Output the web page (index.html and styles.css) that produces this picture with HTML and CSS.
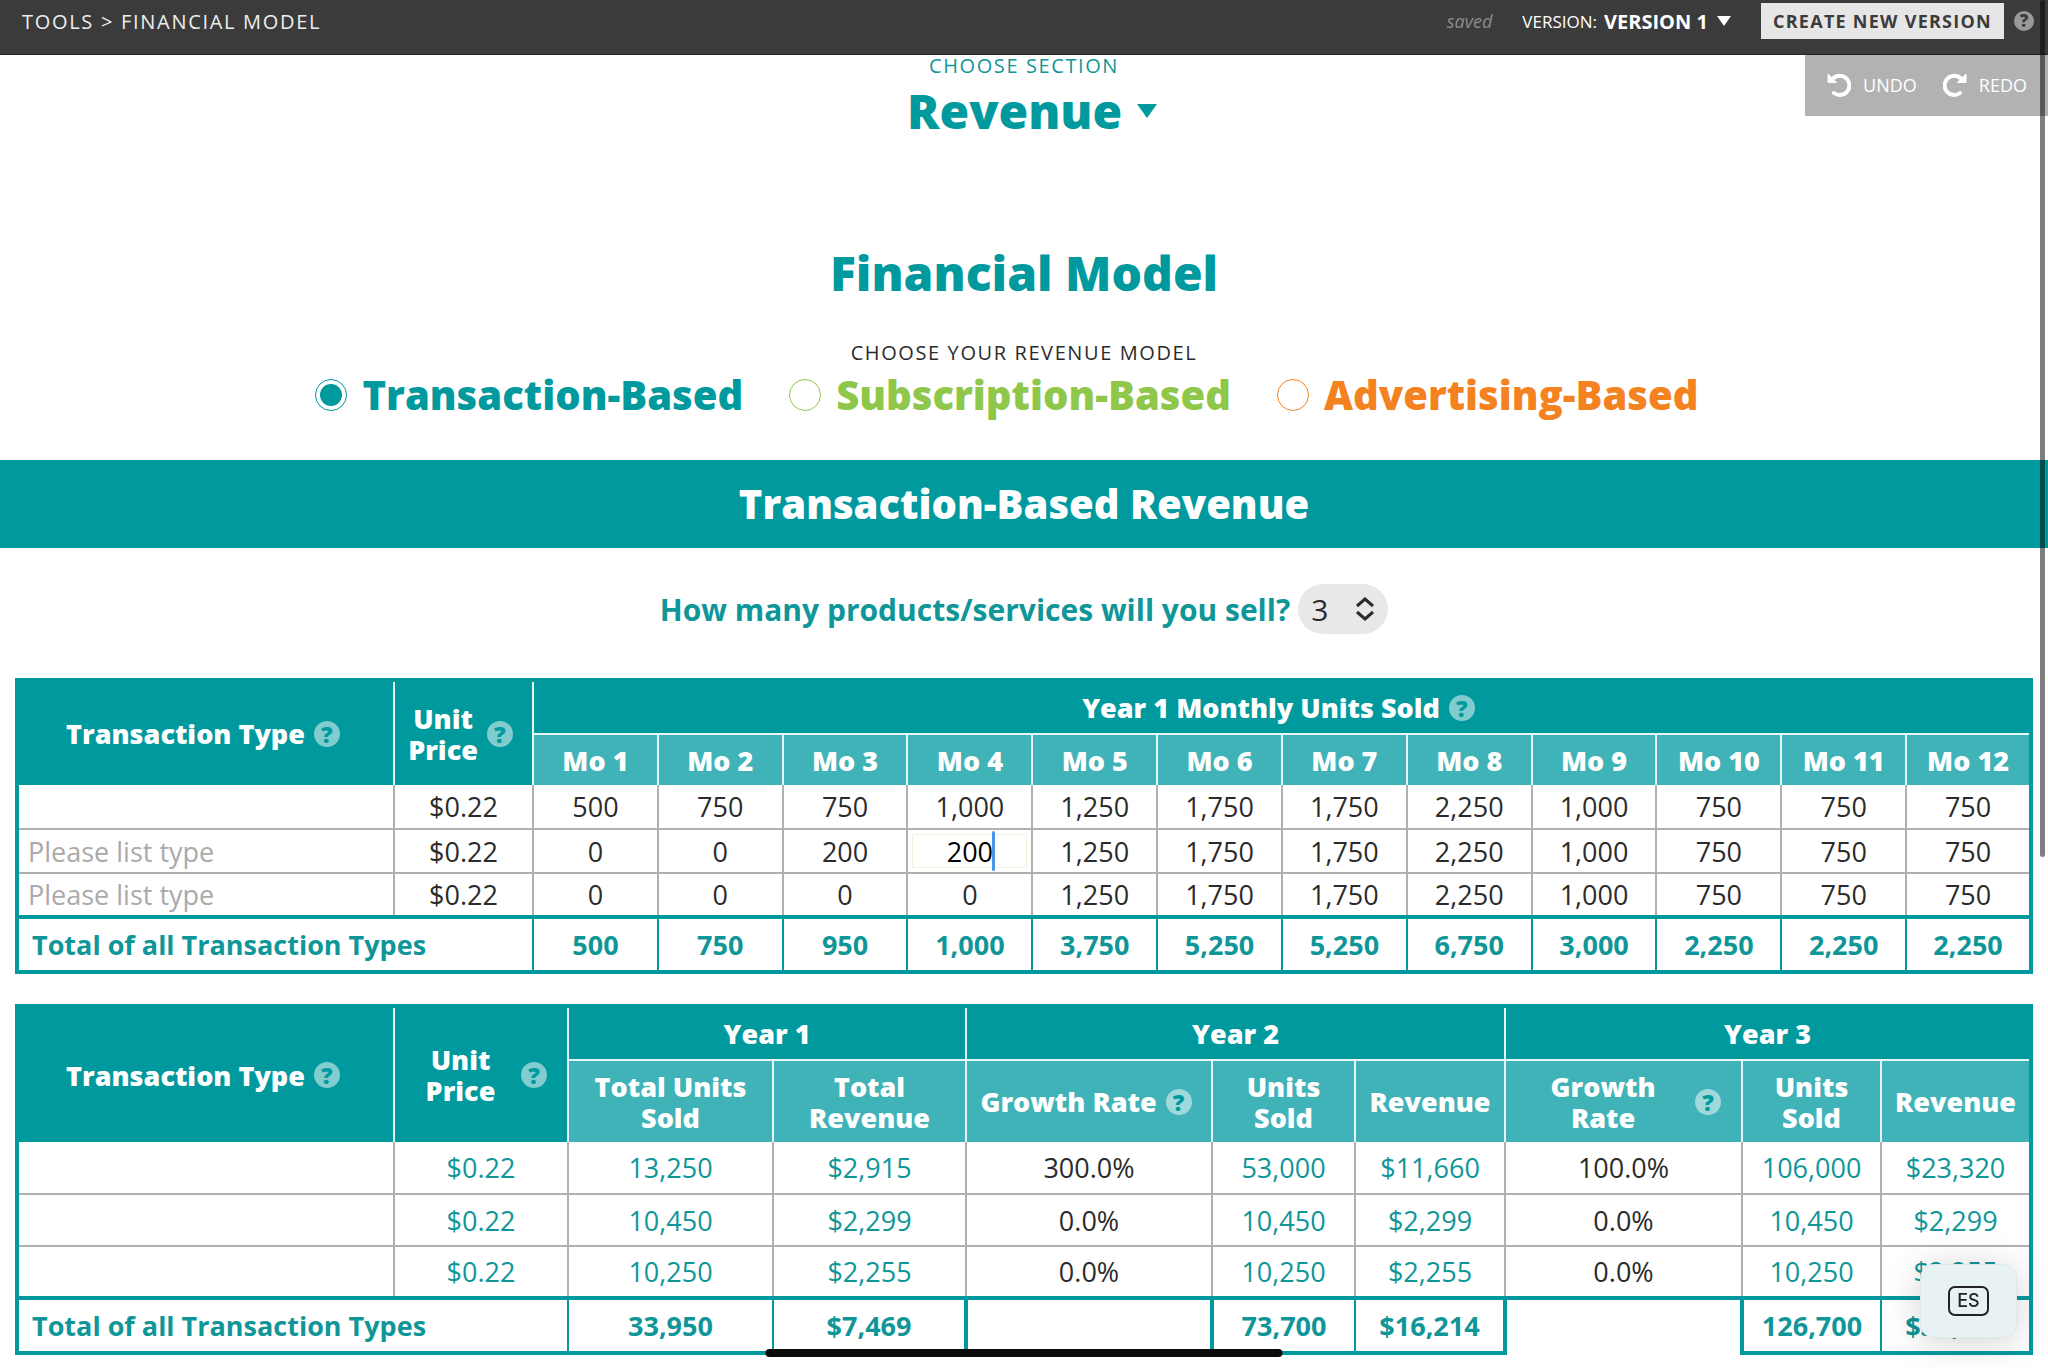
FILE: index.html
```html
<!DOCTYPE html>
<html lang="en">
<head>
<meta charset="utf-8">
<title>Financial Model</title>
<meta name="viewport" content="width=device-width, initial-scale=1">
<link rel="stylesheet" href="styles.css">
</head>
<body>
<header class="topbar">
  <nav class="crumbs"><a href="#tools">TOOLS</a> &gt; FINANCIAL MODEL</nav>
  <div class="topbar-tools">
    <span class="saved">saved</span>
    <div class="version">
      <label class="version-label" for="version">VERSION:</label>
      <select class="version-select" id="version"><option>VERSION 1</option></select>
      <svg class="version-arrow" viewBox="0 0 14 10" aria-hidden="true"><path d="M0 0h14L7 10z" fill="currentColor"/></svg>
    </div>
    <div class="create">
      <button class="create-button" type="button">CREATE NEW VERSION</button>
      <button class="help help-small" type="button" aria-label="About versions">?</button>
    </div>
  </div>
</header>

<div class="history">
  <button class="history-button" type="button">
    <svg class="history-icon" viewBox="0 0 24 24" aria-hidden="true"><path d="M4.5 7.5A9.6 9.6 0 1 1 7 20" fill="none" stroke="currentColor" stroke-width="4" stroke-linecap="round"/><path d="M1 1v8.500h8.500z" fill="currentColor" stroke="currentColor" stroke-width="1" stroke-linejoin="round"/></svg>
    UNDO
  </button>
  <button class="history-button" type="button">
    <svg class="history-icon" viewBox="0 0 24 24" aria-hidden="true"><path d="M19.500 7.500A9.600 9.600 0 1 0 17 20" fill="none" stroke="currentColor" stroke-width="4" stroke-linecap="round"/><path d="M23 1v8.500h-8.500z" fill="currentColor" stroke="currentColor" stroke-width="1" stroke-linejoin="round"/></svg>
    REDO
  </button>
</div>

<main>
  <div class="section-picker">
    <label class="overline" for="section">CHOOSE SECTION</label>
    <div class="section-choice">
      <select class="section-select" id="section"><option>Revenue</option></select>
      <svg class="section-arrow" viewBox="0 0 20 14" aria-hidden="true"><path d="M0 0h20L10 14z" fill="currentColor"/></svg>
    </div>
  </div>

  <h1 class="title">Financial Model</h1>

  <fieldset class="models">
    <legend class="overline models-legend">CHOOSE YOUR REVENUE MODEL</legend>
    <div class="models-row">
      <label class="model model-transaction"><input class="radio" type="radio" name="model" checked>Transaction-Based</label>
      <label class="model model-subscription"><input class="radio" type="radio" name="model">Subscription-Based</label>
      <label class="model model-advertising"><input class="radio" type="radio" name="model">Advertising-Based</label>
    </div>
  </fieldset>

  <h2 class="banner">Transaction-Based Revenue</h2>

  <div class="question">
    <label class="question-label" for="count">How many products/services will you sell?</label>
    <div class="count">
      <select class="count-select" id="count"><option>3</option></select>
      <svg class="count-arrows" viewBox="0 0 20 24" aria-hidden="true"><path d="M2 9l8-7 8 7M2 15l8 7 8-7" fill="none" stroke="currentColor" stroke-width="3"/></svg>
    </div>
  </div>

  <table class="grid monthly">
    <colgroup><col class="col-type"><col class="col-price"><col span="12"></colgroup>
    <thead>
      <tr class="head-groups">
        <th rowspan="2"><div class="head">Transaction Type<button class="help" type="button" aria-label="About transaction types">?</button></div></th>
        <th rowspan="2"><div class="head"><span class="head-text">Unit Price</span><button class="help" type="button" aria-label="About unit price">?</button></div></th>
        <th colspan="12" class="group"><div class="head">Year 1 Monthly Units Sold<button class="help" type="button" aria-label="About monthly units">?</button></div></th>
      </tr>
      <tr class="head-cells">
        <th>Mo 1</th><th>Mo 2</th><th>Mo 3</th><th>Mo 4</th><th>Mo 5</th><th>Mo 6</th><th>Mo 7</th><th>Mo 8</th><th>Mo 9</th><th>Mo 10</th><th>Mo 11</th><th>Mo 12</th>
      </tr>
    </thead>
    <tbody>
      <tr>
        <td><input class="cell cell-type" aria-label="Type 1"></td>
        <td><input class="cell" aria-label="Unit price 1" value="$0.22"></td>
        <td><input class="cell" aria-label="Type 1, month 1" value="500"></td>
        <td><input class="cell" aria-label="Type 1, month 2" value="750"></td>
        <td><input class="cell" aria-label="Type 1, month 3" value="750"></td>
        <td><input class="cell" aria-label="Type 1, month 4" value="1,000"></td>
        <td><input class="cell" aria-label="Type 1, month 5" value="1,250"></td>
        <td><input class="cell" aria-label="Type 1, month 6" value="1,750"></td>
        <td><input class="cell" aria-label="Type 1, month 7" value="1,750"></td>
        <td><input class="cell" aria-label="Type 1, month 8" value="2,250"></td>
        <td><input class="cell" aria-label="Type 1, month 9" value="1,000"></td>
        <td><input class="cell" aria-label="Type 1, month 10" value="750"></td>
        <td><input class="cell" aria-label="Type 1, month 11" value="750"></td>
        <td><input class="cell" aria-label="Type 1, month 12" value="750"></td>
      </tr>
      <tr>
        <td><input class="cell cell-type" aria-label="Type 2" placeholder="Please list type"></td>
        <td><input class="cell" aria-label="Unit price 2" value="$0.22"></td>
        <td><input class="cell" aria-label="Type 2, month 1" value="0"></td>
        <td><input class="cell" aria-label="Type 2, month 2" value="0"></td>
        <td><input class="cell" aria-label="Type 2, month 3" value="200"></td>
        <td><div class="editing"><input class="cell cell-active" aria-label="Type 2, month 4" value="200"><span class="caret"></span></div></td>
        <td><input class="cell" aria-label="Type 2, month 5" value="1,250"></td>
        <td><input class="cell" aria-label="Type 2, month 6" value="1,750"></td>
        <td><input class="cell" aria-label="Type 2, month 7" value="1,750"></td>
        <td><input class="cell" aria-label="Type 2, month 8" value="2,250"></td>
        <td><input class="cell" aria-label="Type 2, month 9" value="1,000"></td>
        <td><input class="cell" aria-label="Type 2, month 10" value="750"></td>
        <td><input class="cell" aria-label="Type 2, month 11" value="750"></td>
        <td><input class="cell" aria-label="Type 2, month 12" value="750"></td>
      </tr>
      <tr>
        <td><input class="cell cell-type" aria-label="Type 3" placeholder="Please list type"></td>
        <td><input class="cell" aria-label="Unit price 3" value="$0.22"></td>
        <td><input class="cell" aria-label="Type 3, month 1" value="0"></td>
        <td><input class="cell" aria-label="Type 3, month 2" value="0"></td>
        <td><input class="cell" aria-label="Type 3, month 3" value="0"></td>
        <td><input class="cell" aria-label="Type 3, month 4" value="0"></td>
        <td><input class="cell" aria-label="Type 3, month 5" value="1,250"></td>
        <td><input class="cell" aria-label="Type 3, month 6" value="1,750"></td>
        <td><input class="cell" aria-label="Type 3, month 7" value="1,750"></td>
        <td><input class="cell" aria-label="Type 3, month 8" value="2,250"></td>
        <td><input class="cell" aria-label="Type 3, month 9" value="1,000"></td>
        <td><input class="cell" aria-label="Type 3, month 10" value="750"></td>
        <td><input class="cell" aria-label="Type 3, month 11" value="750"></td>
        <td><input class="cell" aria-label="Type 3, month 12" value="750"></td>
      </tr>
    </tbody>
    <tfoot>
      <tr>
        <th class="total-label" colspan="2" scope="row">Total of all Transaction Types</th>
        <td>500</td><td>750</td><td>950</td><td>1,000</td><td>3,750</td><td>5,250</td><td>5,250</td><td>6,750</td><td>3,000</td><td>2,250</td><td>2,250</td><td>2,250</td>
      </tr>
    </tfoot>
  </table>

  <table class="grid yearly">
    <colgroup><col class="col-type"><col class="col-price-wide"><col class="col-y1-units"><col class="col-y1-revenue"><col class="col-y2-growth"><col class="col-y2-units"><col class="col-y2-revenue"><col class="col-y3-growth"><col class="col-y3-units"><col></colgroup>
    <thead>
      <tr class="head-groups">
        <th rowspan="2"><div class="head">Transaction Type<button class="help" type="button" aria-label="About transaction types">?</button></div></th>
        <th rowspan="2"><div class="head"><span class="head-text">Unit Price</span><button class="help" type="button" aria-label="About unit price">?</button></div></th>
        <th colspan="2" class="group">Year 1</th>
        <th colspan="3" class="group">Year 2</th>
        <th colspan="3" class="group">Year 3</th>
      </tr>
      <tr class="head-cells">
        <th>Total Units Sold</th>
        <th>Total Revenue</th>
        <th><div class="head head-nowrap">Growth Rate<button class="help" type="button" aria-label="About year 2 growth rate">?</button></div></th>
        <th>Units Sold</th>
        <th>Revenue</th>
        <th><div class="head"><span class="head-text">Growth Rate</span><button class="help" type="button" aria-label="About year 3 growth rate">?</button></div></th>
        <th>Units Sold</th>
        <th>Revenue</th>
      </tr>
    </thead>
    <tbody>
      <tr>
        <td></td><td>$0.22</td><td>13,250</td><td>$2,915</td>
        <td><input class="cell" aria-label="Type 1, year 2 growth rate" value="300.0%"></td>
        <td>53,000</td><td>$11,660</td>
        <td><input class="cell" aria-label="Type 1, year 3 growth rate" value="100.0%"></td>
        <td>106,000</td><td>$23,320</td>
      </tr>
      <tr>
        <td></td><td>$0.22</td><td>10,450</td><td>$2,299</td>
        <td><input class="cell" aria-label="Type 2, year 2 growth rate" value="0.0%"></td>
        <td>10,450</td><td>$2,299</td>
        <td><input class="cell" aria-label="Type 2, year 3 growth rate" value="0.0%"></td>
        <td>10,450</td><td>$2,299</td>
      </tr>
      <tr>
        <td></td><td>$0.22</td><td>10,250</td><td>$2,255</td>
        <td><input class="cell" aria-label="Type 3, year 2 growth rate" value="0.0%"></td>
        <td>10,250</td><td>$2,255</td>
        <td><input class="cell" aria-label="Type 3, year 3 growth rate" value="0.0%"></td>
        <td>10,250</td><td>$2,255</td>
      </tr>
    </tbody>
    <tfoot>
      <tr>
        <th class="total-label" colspan="2" scope="row">Total of all Transaction Types</th>
        <td>33,950</td><td>$7,469</td><td class="blank"></td><td>73,700</td><td>$16,214</td><td class="blank blank-open"></td><td>126,700</td><td>$32,428</td>
      </tr>
    </tfoot>
  </table>
</main>

<button class="language" type="button"><span class="language-code">ES</span></button>
<div class="scroll-thumb"></div>
<div class="home-bar"></div>
</body>
</html>
```
FILE: styles.css
```css
:root {
  --teal: #00999d;
  --teal-light: #40b3b8;
  --teal-text: #0f9698;
  --ink: #2b2b2b;
  --line: #b0b0b0;
}

* {
  box-sizing: border-box;
}

body {
  margin: 0;
  background: #fff;
  color: var(--ink);
  font-family: "Open Sans", "Noto Sans", sans-serif;
  font-size: 27px;
  overflow: hidden;
}

button,
select,
input {
  margin: 0;
  padding: 0;
  border: 0;
  background: none;
  color: inherit;
  font: inherit;
  letter-spacing: inherit;
  appearance: none;
}

a {
  color: inherit;
  text-decoration: none;
}

/* Top bar */
.topbar {
  display: flex;
  justify-content: space-between;
  align-items: center;
  height: 55px;
  padding: 3px 14px 15px 22px;
  border-bottom: 1px solid #222;
  background: #3b3b3b;
  color: #fff;
}

.crumbs {
  font-size: 20px;
  letter-spacing: 0.085em;
  color: #eee;
}

.topbar-tools {
  display: flex;
  align-items: center;
  gap: 30px;
}

.saved {
  font-size: 18px;
  font-style: italic;
  color: #8c8c8c;
}

.version {
  display: flex;
  align-items: center;
}

.version-label {
  margin-right: 7px;
  font-size: 17px;
}

.version-select {
  margin-right: 9px;
  font-size: 20px;
  font-weight: 700;
}

.version-arrow {
  width: 14px;
  height: 10px;
}

.create {
  display: flex;
  align-items: center;
  gap: 10px;
}

.create-button {
  height: 36px;
  padding: 0 12px;
  background: #e6e6e6;
  color: #3b3b3b;
  font-size: 18px;
  font-weight: 700;
  letter-spacing: 0.07em;
}

.help {
  flex: none;
  width: 26px;
  height: 26px;
  border-radius: 50%;
  background: rgba(255, 255, 255, 0.5);
  color: var(--teal);
  font-size: 23px;
  font-weight: 800;
  line-height: 26px;
  text-align: center;
}

.help-small {
  width: 20px;
  height: 20px;
  background: #999;
  color: #3b3b3b;
  font-size: 17px;
  line-height: 20px;
}

.history {
  position: absolute;
  top: 55px;
  right: 0;
  display: flex;
  gap: 26px;
  padding: 15px 21px 17px 22px;
  background: #b2b2b2;
  color: #fff;
}

.history-button {
  display: flex;
  align-items: center;
  gap: 12px;
  height: 29px;
  font-size: 18px;
}

.history-icon {
  width: 24px;
  height: 24px;
}

/* Section and model choice */
.section-picker {
  display: flex;
  flex-direction: column;
  align-items: center;
  gap: 5px;
  padding-top: 1px;
  color: var(--teal-text);
}

.overline {
  font-size: 20px;
  line-height: 20px;
  letter-spacing: 0.08em;
}

.section-choice {
  display: flex;
  align-items: center;
  gap: 14px;
  padding-left: 16px;
  color: var(--teal);
}

.section-select {
  height: 60px;
  font-size: 48px;
  font-weight: 800;
  line-height: 60px;
}

.section-arrow {
  width: 20px;
  height: 14px;
}

.title {
  margin: 102px 0 40px;
  color: var(--teal);
  font-size: 48px;
  font-weight: 800;
  line-height: 60px;
  text-align: center;
}

.models {
  margin: 0;
  padding: 0;
  border: 0;
}

.models-legend {
  margin: 0 auto;
  padding: 0;
}

.models-row {
  display: flex;
  justify-content: center;
  gap: 46px;
  padding: 7px 34px 40px 0;
}

.model {
  display: flex;
  align-items: center;
  gap: 15px;
  font-size: 40px;
  font-weight: 800;
  line-height: 50px;
}

.model-transaction {
  color: var(--teal);
}

.model-subscription {
  color: #8fc74a;
}

.model-advertising {
  color: #f58220;
}

.radio {
  display: grid;
  place-items: center;
  width: 32px;
  height: 32px;
  border: 1px solid currentColor;
  border-radius: 50%;
}

.radio:checked::before {
  content: "";
  width: 22px;
  height: 22px;
  border-radius: 50%;
  background: currentColor;
}

.banner {
  margin: 0;
  padding: 20px;
  background: var(--teal);
  color: #fff;
  font-size: 40px;
  font-weight: 800;
  line-height: 48px;
  text-align: center;
}

.question {
  display: flex;
  justify-content: center;
  align-items: center;
  gap: 8px;
  margin: 36px 0 44px;
}

.question-label {
  color: var(--teal-text);
  font-size: 30px;
  font-weight: 700;
}

.count {
  display: grid;
  align-items: center;
  width: 90px;
  height: 50px;
}

.count-select,
.count-arrows {
  grid-area: 1 / 1;
}

.count-select {
  height: 50px;
  padding: 0 13px;
  border-radius: 25px;
  background: #e8e8e8;
  font-size: 30px;
}

.count-arrows {
  justify-self: end;
  width: 20px;
  height: 24px;
  margin-right: 13px;
  pointer-events: none;
}

/* Data grids */
.grid {
  width: calc(100% - 30px);
  margin: 0 15px 30px;
  border: 4px solid var(--teal);
  border-collapse: collapse;
  table-layout: fixed;
}

.col-type { width: 377px; }
.col-price { width: 139px; }
.col-price-wide { width: 174px; }
.col-y1-units { width: 205px; }
.col-y1-revenue { width: 193px; }
.col-y2-growth { width: 246px; }
.col-y2-units { width: 143px; }
.col-y2-revenue { width: 150px; }
.col-y3-growth { width: 237px; }
.col-y3-units { width: 139px; }

.grid th {
  padding: 0 5px;
}

.grid td {
  padding: 0 1px;
  text-align: center;
}

.grid thead th {
  background: var(--teal);
  color: #fff;
  font-weight: 800;
  line-height: 31px;
}

.grid thead th + th,
.head-cells th {
  border-left: 2px solid #e6f6f6;
}

.grid thead .head-cells th {
  border-top: 2px solid #e6f6f6;
  background: var(--teal-light);
}

.head-groups {
  height: 54px;
}

.monthly .head-cells {
  height: 51px;
}

.yearly .head-cells {
  height: 82px;
}

.head {
  display: flex;
  justify-content: center;
  align-items: center;
  gap: 9px;
  padding: 0 15px 0 9px;
}

.head-nowrap {
  white-space: nowrap;
}

.monthly tbody tr {
  height: 44px;
}

.yearly tbody tr {
  height: 52px;
}

.grid tbody tr + tr td {
  border-top: 2px solid var(--line);
}

.grid tbody td + td {
  border-left: 2px solid var(--line);
}

.yearly tbody {
  color: var(--teal-text);
}

.cell {
  display: block;
  width: 100%;
  height: 40px;
  color: var(--ink);
  text-align: center;
}

.cell-type {
  padding: 0 8px;
  text-align: left;
}

.cell-type::placeholder {
  color: #aaa;
  opacity: 1;
}

.editing {
  position: relative;
}

.cell-active {
  outline: 1px solid #f3f1e0;
  outline-offset: -4px;
  color: #000;
}

.caret {
  position: absolute;
  top: 0;
  left: calc(50% + 22px);
  width: 3px;
  height: 40px;
  border-radius: 2px;
  background: #4a94ea;
}

.grid tfoot tr {
  height: 55px;
}

.grid tfoot th,
.grid tfoot td {
  border-top: 4px solid var(--teal);
  color: var(--teal-text);
  font-weight: 700;
}

.grid tfoot td {
  border-left: 2px solid var(--teal);
}

.grid tfoot .total-label {
  padding-left: 13px;
  text-align: left;
}

.grid tfoot .blank {
  border-right: 4px solid var(--teal);
  border-left: 4px solid var(--teal);
}

.grid tfoot .blank-open {
  border-bottom-style: hidden;
}

/* Floating parts */
.language {
  position: fixed;
  right: 31px;
  bottom: 30px;
  display: grid;
  place-items: center;
  width: 97px;
  height: 74px;
  border: 1px solid #dde8ea;
  border-radius: 14px;
  background: #e8f2f5;
  box-shadow: 0 4px 36px rgba(0, 0, 0, 0.18);
  color: #222;
}

.language-code {
  width: 41px;
  height: 30px;
  border: 2px solid #222;
  border-radius: 7px;
  font-family: Inter, sans-serif;
  font-size: 18px;
  font-weight: 500;
  line-height: 26px;
}

.scroll-thumb {
  position: fixed;
  top: 0;
  right: 3px;
  width: 5px;
  height: 857px;
  border-radius: 3px;
  background: rgba(0, 0, 0, 0.5);
}

.home-bar {
  position: fixed;
  bottom: 11px;
  left: 50%;
  width: 517px;
  height: 8px;
  border-radius: 4px;
  background: #0a0a0a;
  translate: -50% 0;
}
```
